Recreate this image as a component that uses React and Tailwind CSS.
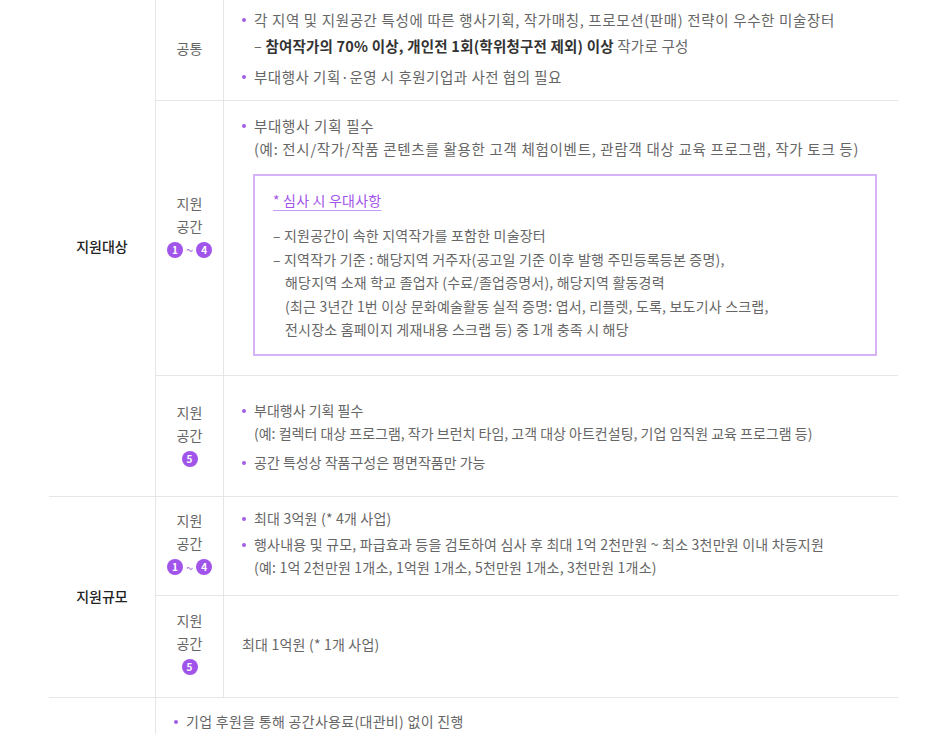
import React from "react";

const Dot = () => (
  <span className="mt-[10px] mr-[8px] h-[4px] w-[4px] shrink-0 rounded-full bg-[#a25ee8]" />
);

const Badge = ({ n }) => (
  <span className="inline-flex h-[16px] w-[16px] items-center justify-center rounded-full bg-[#a154ea] text-[10px] font-bold leading-none text-white">
    {n}
  </span>
);

const SubLabel = ({ range, extra = "" }) => (
  <div className={`flex w-[68px] shrink-0 flex-col items-center justify-center border-r border-[#e6e6e6] text-[14px] leading-[23px] tracking-normal text-[#666] ${extra}`}>
    <span>지원</span>
    <span>공간</span>
    {range ? (
      <span className="mt-[4px] flex items-center gap-[3px]">
        <Badge n="1" />
        <span className="text-[13px] leading-none text-[#a97ad8]">~</span>
        <Badge n="4" />
      </span>
    ) : (
      <span className="mt-[4px] flex items-center">
        <Badge n="5" />
      </span>
    )}
  </div>
);

const Item = ({ children, className = "" }) => (
  <div className={`flex ${className}`}>
    <Dot />
    <div className="flex-1">{children}</div>
  </div>
);

export default function App() {
  return (
    <div
      className="min-h-[734px] bg-white px-[49px] text-[14px] leading-[23px] tracking-[0.2px] text-[#666]"
      style={{ fontFamily: '"Noto Sans CJK KR", "Noto Sans", sans-serif' }}
    >
      {/* 지원대상 */}
      <div className="flex border-b border-[#e6e6e6]">
        <div className="flex w-[107px] shrink-0 items-center justify-center border-r border-[#e6e6e6] pb-[2px] text-[14px] font-medium tracking-normal text-[#222]">
          지원대상
        </div>
        <div className="flex flex-1 flex-col">
          {/* 공통 */}
          <div className="flex border-b border-[#e6e6e6]">
            <div className="flex w-[68px] shrink-0 items-center justify-center border-r border-[#e6e6e6] pb-[4px] tracking-normal text-[#666]">
              공통
            </div>
            <div className="flex flex-1 flex-col pt-[8px] pb-[12px] pl-[18px] text-[14.5px] tracking-[0.65px]">
              <Item>
                <div>각 지역 및 지원공간 특성에 따른 행사기획, 작가매칭, 프로모션(판매) 전략이 우수한 미술장터</div>
                <div className="mt-[3px] tracking-[0.2px]">
                  – <b className="font-bold text-[#333]">참여작가의 70% 이상, 개인전 1회(학위청구전 제외) 이상</b> 작가로 구성
                </div>
              </Item>
              <Item className="mt-[8px] tracking-[0.5px]">부대행사 기획·운영 시 후원기업과 사전 협의 필요</Item>
            </div>
          </div>
          {/* 지원공간 1~4 */}
          <div className="flex border-b border-[#e6e6e6]">
            <SubLabel range extra="pb-[26px]" />
            <div className="flex flex-1 flex-col pt-[13px] pb-[19px] pl-[18px] pr-[21px]">
              <Item className="text-[14.5px] tracking-[0.7px]">
                <div>부대행사 기획 필수</div>
                <div>(예: 전시/작가/작품 콘텐츠를 활용한 고객 체험이벤트, 관람객 대상 교육 프로그램, 작가 토크 등)</div>
              </Item>
              <div className="mt-[14px] ml-[11px] border-2 border-[#d5b3f6] pt-[13px] pb-[12px] pl-[18px] pr-[18px] leading-[23.5px]">
                <div className="leading-[23px] text-[#a155ea] underline decoration-[#c99cf3] underline-offset-[4px]">* 심사 시 우대사항</div>
                <div className="mt-[12px]">– 지원공간이 속한 지역작가를 포함한 미술장터</div>
                <div>– 지역작가 기준 : 해당지역 거주자(공고일 기준 이후 발행 주민등록등본 증명),</div>
                <div className="pl-[12px]">해당지역 소재 학교 졸업자 (수료/졸업증명서), 해당지역 활동경력</div>
                <div className="pl-[12px]">(최근 3년간 1번 이상 문화예술활동 실적 증명: 엽서, 리플렛, 도록, 보도기사 스크랩,</div>
                <div className="pl-[12px]">전시장소 홈페이지 게재내용 스크랩 등) 중 1개 충족 시 해당</div>
              </div>
            </div>
          </div>
          {/* 지원공간 5 */}
          <div className="flex min-h-[120px]">
            <SubLabel extra="pb-[4px]" />
            <div className="flex flex-1 flex-col justify-center pt-[2px] pl-[18px] tracking-normal">
              <Item>
                <div>부대행사 기획 필수</div>
                <div>(예: 컬렉터 대상 프로그램, 작가 브런치 타임, 고객 대상 아트컨설팅, 기업 임직원 교육 프로그램 등)</div>
              </Item>
              <Item className="mt-[6px]">공간 특성상 작품구성은 평면작품만 가능</Item>
            </div>
          </div>
        </div>
      </div>

      {/* 지원규모 */}
      <div className="flex border-b border-[#e6e6e6]">
        <div className="flex w-[107px] shrink-0 items-center justify-center border-r border-[#e6e6e6] text-[14px] font-medium tracking-normal text-[#222]">
          지원규모
        </div>
        <div className="flex flex-1 flex-col">
          <div className="flex min-h-[99px] border-b border-[#e6e6e6]">
            <SubLabel range extra="pb-[7px]" />
            <div className="flex flex-1 flex-col justify-center pb-[5px] pl-[18px]">
              <Item>최대 3억원 (* 4개 사업)</Item>
              <Item className="mt-[3px]">
                <div>행사내용 및 규모, 파급효과 등을 검토하여 심사 후 최대 1억 2천만원 ~ 최소 3천만원 이내 차등지원</div>
                <div>(예: 1억 2천만원 1개소, 1억원 1개소, 5천만원 1개소, 3천만원 1개소)</div>
              </Item>
            </div>
          </div>
          <div className="flex min-h-[101px]">
            <SubLabel extra="pb-[8px]" />
            <div className="flex flex-1 items-center pb-[4px] pl-[18px]">최대 1억원 (* 1개 사업)</div>
          </div>
        </div>
      </div>

      {/* 하단 */}
      <div className="flex">
        <div className="w-[107px] shrink-0 border-r border-[#e6e6e6]" />
        <div className="flex flex-1 flex-col pt-[12px] pb-[20px] pl-[18px] tracking-[0.3px]">
          <Item>기업 후원을 통해 공간사용료(대관비) 없이 진행</Item>
        </div>
      </div>
    </div>
  );
}
